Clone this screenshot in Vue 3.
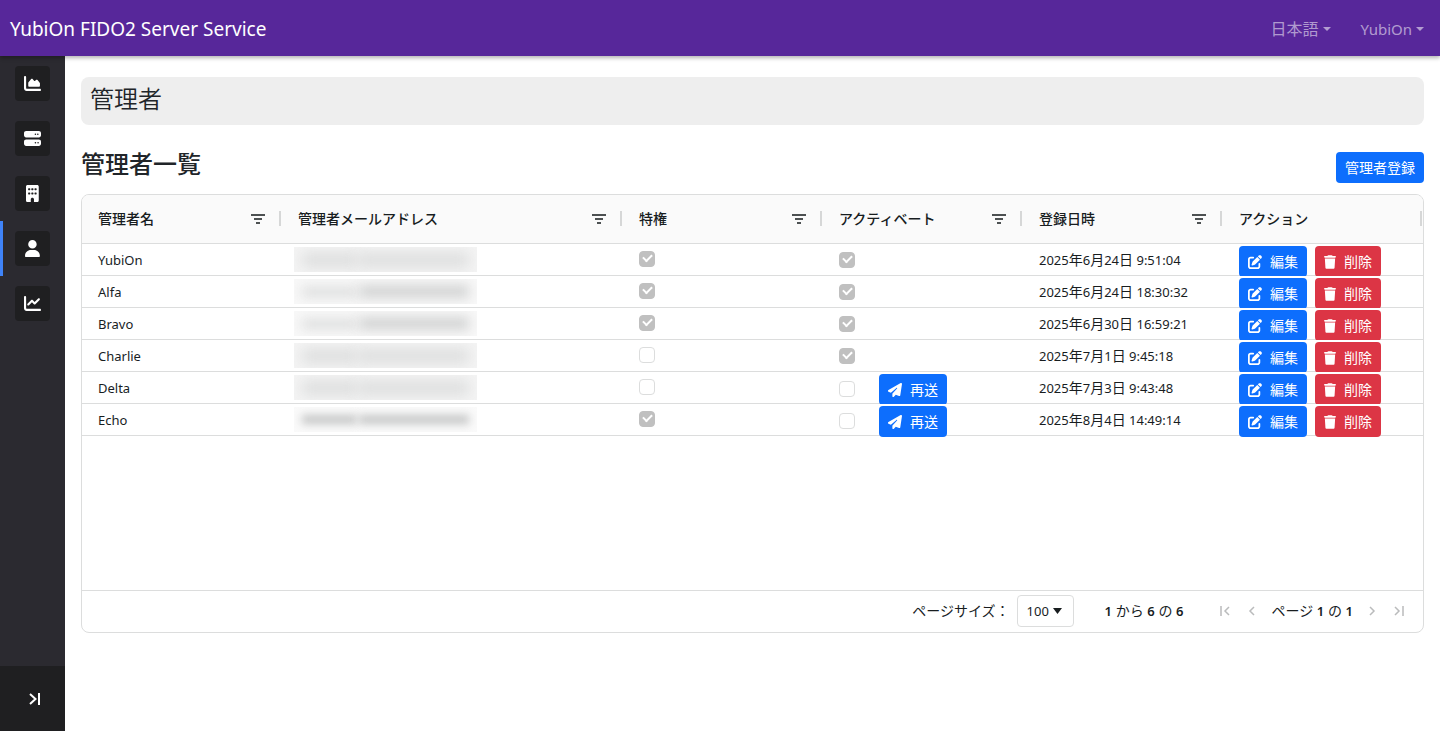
<script setup>
import { ref } from 'vue'

const icons = {
  area: { w: 512, d: 'M64 64c0-17.7-14.3-32-32-32S0 46.3 0 64V400c0 44.2 35.8 80 80 80H480c17.7 0 32-14.3 32-32s-14.3-32-32-32H80c-8.8 0-16-7.2-16-16V64zm96 288H448c17.7 0 32-14.3 32-32V251.8c0-7.6-2.7-15-7.7-20.8l-65.8-76.8c-12.1-14.2-33.7-15-46.9-1.8l-21 21c-10 10-26.4 9.2-35.4-1.6l-39.2-47c-12.6-15.1-35.7-15.4-48.7-.6L135.9 215c-5.1 5.8-7.9 13.3-7.9 21.1v84c0 17.7 14.3 32 32 32z' },
  server: { w: 512, d: 'M64 32C28.7 32 0 60.7 0 96v64c0 35.3 28.7 64 64 64H448c35.3 0 64-28.7 64-64V96c0-35.3-28.7-64-64-64H64zm280 72a24 24 0 1 1 0 48 24 24 0 1 1 0-48zm48 24a24 24 0 1 1 48 0 24 24 0 1 1 -48 0zM64 288c-35.3 0-64 28.7-64 64v64c0 35.3 28.7 64 64 64H448c35.3 0 64-28.7 64-64V352c0-35.3-28.7-64-64-64H64zm280 72a24 24 0 1 1 0 48 24 24 0 1 1 0-48zm56 24a24 24 0 1 1 48 0 24 24 0 1 1 -48 0z' },
  building: { w: 384, d: 'M48 0C21.5 0 0 21.5 0 48V464c0 26.5 21.5 48 48 48h96V432c0-26.5 21.5-48 48-48s48 21.5 48 48v80h96c26.5 0 48-21.5 48-48V48c0-26.5-21.5-48-48-48H48zM64 240c0-8.8 7.2-16 16-16h32c8.8 0 16 7.2 16 16v32c0 8.8-7.2 16-16 16H80c-8.8 0-16-7.2-16-16V240zm112-16h32c8.8 0 16 7.2 16 16v32c0 8.8-7.2 16-16 16H176c-8.8 0-16-7.2-16-16V240c0-8.8 7.2-16 16-16zm80 16c0-8.8 7.2-16 16-16h32c8.8 0 16 7.2 16 16v32c0 8.8-7.2 16-16 16H272c-8.8 0-16-7.2-16-16V240zM80 96h32c8.8 0 16 7.2 16 16v32c0 8.8-7.2 16-16 16H80c-8.8 0-16-7.2-16-16V112c0-8.8 7.2-16 16-16zm80 16c0-8.8 7.2-16 16-16h32c8.8 0 16 7.2 16 16v32c0 8.8-7.2 16-16 16H176c-8.8 0-16-7.2-16-16V112zM272 96h32c8.8 0 16 7.2 16 16v32c0 8.8-7.2 16-16 16H272c-8.8 0-16-7.2-16-16V112c0-8.8 7.2-16 16-16z' },
  user: { w: 448, d: 'M224 256A128 128 0 1 0 224 0a128 128 0 1 0 0 256zm-45.7 48C79.8 304 0 383.8 0 482.3C0 498.7 13.3 512 29.7 512H418.3c16.4 0 29.7-13.3 29.7-29.7C448 383.8 368.2 304 269.7 304H178.3z' },
  line: { w: 512, d: 'M64 64c0-17.7-14.3-32-32-32S0 46.3 0 64V400c0 44.2 35.8 80 80 80H480c17.7 0 32-14.3 32-32s-14.3-32-32-32H80c-8.8 0-16-7.2-16-16V64zm406.6 86.6c12.5-12.5 12.5-32.8 0-45.3s-32.8-12.5-45.3 0L320 210.7l-57.4-57.4c-12.5-12.5-32.8-12.5-45.3 0l-112 112c-12.5 12.5-12.5 32.8 0 45.3s32.8 12.5 45.3 0L240 221.3l57.4 57.4c12.5 12.5 32.8 12.5 45.3 0l128-128z' }
}

const menu = [
  { icon: icons.area, label: 'ダッシュボード' },
  { icon: icons.server, label: 'サーバー' },
  { icon: icons.building, label: '会社' },
  { icon: icons.user, label: '管理者', active: true },
  { icon: icons.line, label: '統計' }
]

const columns = [
  { title: '管理者名', filter: true },
  { title: '管理者メールアドレス', filter: true, wide: true },
  { title: '特権', filter: true },
  { title: 'アクティベート', filter: true },
  { title: '登録日時', filter: true },
  { title: 'アクション', filter: false }
]

const admins = [
  { name: 'YubiOn', privileged: true, activated: true, created: '2025年6月24日 9:51:04', tone: 'flat' },
  { name: 'Alfa', privileged: true, activated: true, created: '2025年6月24日 18:30:32', tone: 'mid' },
  { name: 'Bravo', privileged: true, activated: true, created: '2025年6月30日 16:59:21', tone: 'mid' },
  { name: 'Charlie', privileged: false, activated: true, created: '2025年7月1日 9:45:18', tone: 'flat' },
  { name: 'Delta', privileged: false, activated: false, created: '2025年7月3日 9:43:48', tone: 'flat' },
  { name: 'Echo', privileged: true, activated: false, created: '2025年8月4日 14:49:14', tone: 'sharp' }
]

// Splits a date into digit runs and kanji units, which are set at different sizes.
const dateParts = (text) => text.split(/([年月日])/).filter(Boolean)
const isUnit = (part) => /^[年月日]$/.test(part)

const pageSize = ref('100')
</script>

<template>
  <div class="app">
    <header class="topbar">
      <a class="brand" href="#">YubiOn FIDO2 Server Service</a>
      <nav class="topnav">
        <button type="button" class="drop lang">日本語<span class="caret"></span></button>
        <button type="button" class="drop">YubiOn<span class="caret"></span></button>
      </nav>
    </header>

    <div class="body">
      <aside class="sidebar">
        <nav class="menu">
          <a v-for="m in menu" :key="m.label" href="#" class="item" :class="{ active: m.active }" :aria-label="m.label">
            <span class="tile">
              <svg class="tile-icon" :viewBox="`0 0 ${m.icon.w} 512`" aria-hidden="true"><path :d="m.icon.d" /></svg>
            </span>
          </a>
        </nav>
        <button type="button" class="expand" aria-label="メニューを開く">
          <svg width="12" height="12" viewBox="0 0 12 12" aria-hidden="true"><path d="M1 1l5.5 5L1 11M10 0v12" fill="none" stroke="#fff" stroke-width="2" /></svg>
        </button>
      </aside>

      <main class="main">
        <h1 class="page-title">管理者</h1>
        <div class="list-head">
          <h2 class="list-title">管理者一覧</h2>
          <button type="button" class="btn primary">管理者登録</button>
        </div>

        <section class="grid">
          <div class="grid-body">
            <table class="table">
              <colgroup>
                <col v-for="c in columns" :key="c.title" :class="c.wide ? 'col-wide' : 'col'" />
              </colgroup>
              <thead>
                <tr>
                  <th v-for="c in columns" :key="c.title" scope="col">
                    <div class="th">
                      <span>{{ c.title }}</span>
                      <button v-if="c.filter" type="button" class="filter" :aria-label="c.title + 'フィルター'">
                        <svg width="16" height="16" viewBox="0 0 16 16" aria-hidden="true"><path d="M1 4h14M4 8h8M6 12h4" fill="none" stroke="#4d5152" stroke-width="2" /></svg>
                      </button>
                    </div>
                  </th>
                </tr>
              </thead>
              <tbody>
                <tr v-for="a in admins" :key="a.name">
                  <td><div class="cell">{{ a.name }}</div></td>
                  <td>
                    <div class="cell">
                      <span class="mask" :class="a.tone" role="img" aria-label="非表示のメールアドレス"><i class="smear left"></i><i class="smear right"></i></span>
                    </div>
                  </td>
                  <td><div class="cell check-cell"><input type="checkbox" class="check" :checked="a.privileged" disabled :aria-label="a.name + ' 特権'" /></div></td>
                  <td>
                    <div class="cell" :class="{ actions: !a.activated, resend: !a.activated }">
                      <input type="checkbox" class="check" :checked="a.activated" disabled :aria-label="a.name + ' アクティベート'" />
                      <button v-if="!a.activated" type="button" class="btn primary">
                        <svg class="ic" viewBox="0 0 512 512" aria-hidden="true"><path d="M498.1 5.6c10.1 7 15.4 19.1 13.5 31.2l-64 416c-1.5 9.7-7.4 18.2-16 23s-18.9 5.4-28 1.6L284 427.7l-68.5 74.1c-8.9 9.7-22.9 12.9-35.2 8.1S160 493.2 160 480V396.4c0-4 1.5-7.8 4.2-10.7L331.8 202.8c5.8-6.3 5.6-16-.4-22s-15.7-6.4-22-.7L106 360.8 17.7 316.6C7.1 311.3 .3 300.7 0 288.9s5.9-22.8 16.1-28.7l448-256c10.7-6.1 23.9-5.5 34 1.4z" /></svg>再送
                      </button>
                    </div>
                  </td>
                  <td><div class="cell"><time><span v-for="(p, i) in dateParts(a.created)" :key="i" :class="{ unit: isUnit(p) }">{{ p }}</span></time></div></td>
                  <td>
                    <div class="cell actions">
                      <button type="button" class="btn primary">
                        <svg class="ic" viewBox="0 0 512 512" aria-hidden="true"><path d="M471.6 21.7c-21.9-21.9-57.3-21.9-79.2 0L362.3 51.7l97.9 97.9 30.1-30.1c21.9-21.9 21.9-57.3 0-79.2L471.6 21.7zm-299.2 220c-6.1 6.1-10.8 13.6-13.5 21.9l-29.6 88.8c-2.9 8.6-.6 18.1 5.8 24.6s15.9 8.7 24.6 5.8l88.8-29.6c8.2-2.7 15.7-7.4 21.9-13.5L437.7 172.3 339.7 74.3 172.4 241.7zM96 64C43 64 0 107 0 160V416c0 53 43 96 96 96H352c53 0 96-43 96-96V320c0-17.7-14.3-32-32-32s-32 14.3-32 32v96c0 17.7-14.3 32-32 32H96c-17.7 0-32-14.3-32-32V160c0-17.7 14.3-32 32-32h96c17.7 0 32-14.3 32-32s-14.3-32-32-32H96z" /></svg>編集
                      </button>
                      <button type="button" class="btn danger">
                        <svg class="ic narrow" viewBox="0 0 448 512" aria-hidden="true"><path d="M135.2 17.7L128 32H32C14.3 32 0 46.3 0 64S14.3 96 32 96H416c17.7 0 32-14.3 32-32s-14.3-32-32-32H320l-7.2-14.3C307.4 6.8 296.3 0 284.2 0H163.8c-12.1 0-23.2 6.8-28.6 17.7zM416 128H32L53.2 467c1.6 25.3 22.6 45 47.9 45H346.9c25.3 0 46.3-19.7 47.9-45L416 128z" /></svg>削除
                      </button>
                    </div>
                  </td>
                </tr>
              </tbody>
            </table>
          </div>

          <footer class="pager">
            <div class="size">
              <label for="page-size">ページサイズ：</label>
              <span class="select-wrap">
                <select id="page-size" v-model="pageSize" class="select">
                  <option>20</option>
                  <option>50</option>
                  <option>100</option>
                </select>
                <svg class="select-caret" width="9" height="6" viewBox="0 0 9 6" aria-hidden="true"><path d="M0 0h9L4.500 6z" fill="#181d1f" /></svg>
              </span>
            </div>
            <div class="summary"><b>1</b> から <b>6</b> の <b>6</b></div>
            <div class="pages">
              <button type="button" class="page-btn" disabled aria-label="最初のページ"><svg width="16" height="16" viewBox="0 0 16 16"><path d="M4 3v10M12 4L8 8l4 4" /></svg></button>
              <button type="button" class="page-btn" disabled aria-label="前のページ"><svg width="16" height="16" viewBox="0 0 16 16"><path d="M10 4L6 8l4 4" /></svg></button>
              <span class="page-text">ページ <b>1</b> の <b>1</b></span>
              <button type="button" class="page-btn" disabled aria-label="次のページ"><svg width="16" height="16" viewBox="0 0 16 16"><path d="M6 4l4 4-4 4" /></svg></button>
              <button type="button" class="page-btn" disabled aria-label="最後のページ"><svg width="16" height="16" viewBox="0 0 16 16"><path d="M4 4l4 4-4 4M12 3v10" /></svg></button>
            </div>
          </footer>
        </section>
      </main>
    </div>
  </div>
</template>

<style>
body {
  margin: 0;
  background: #fff;
}
</style>

<style scoped>
.app {
  min-height: 100vh;
  display: flex;
  flex-direction: column;
  font-family: "Noto Sans", "Noto Sans CJK JP", sans-serif;
  font-size: 14px;
  color: #212529;
}
.app * {
  box-sizing: border-box;
}
button,
select {
  font: inherit;
  margin: 0;
}
.topbar {
  height: 56px;
  display: flex;
  align-items: center;
  justify-content: space-between;
  padding: 2px 16px 0 10px;
  background: #57279a;
  box-shadow: 0 2px 4px rgba(0, 0, 0, 0.3);
  position: relative;
  z-index: 2;
}
.brand {
  color: #fff;
  font-size: 19px;
  line-height: 30px;
  text-decoration: none;
}
.topnav {
  display: flex;
  gap: 30px;
}
.drop {
  display: flex;
  align-items: center;
  gap: 4px;
  padding: 0;
  border: 0;
  background: none;
  color: rgba(255, 255, 255, 0.55);
  font-size: 15px;
  line-height: 22px;
}
.lang {
  font-size: 16px;
}
.caret {
  border: 4px solid transparent;
  border-top-color: currentColor;
  border-bottom: 0;
}
.body {
  flex: 1;
  display: flex;
}
.sidebar {
  width: 65px;
  flex: none;
  display: flex;
  flex-direction: column;
  justify-content: space-between;
  background: #2b2a30;
}
.menu {
  display: flex;
  flex-direction: column;
}
.item {
  height: 55px;
  display: flex;
  justify-content: center;
  padding-top: 10px;
  position: relative;
}
.item.active::before {
  content: "";
  position: absolute;
  left: 0;
  top: 0;
  bottom: 0;
  width: 3px;
  background: #3f83f8;
}
.tile {
  width: 35px;
  height: 35px;
  display: flex;
  align-items: center;
  justify-content: center;
  border-radius: 4px;
  background: #1f1f21;
}
.tile-icon {
  height: 17px;
  fill: #fff;
}
.expand {
  height: 65px;
  display: flex;
  align-items: center;
  justify-content: center;
  padding: 0 0 0 5px;
  border: 0;
  background: #1f1f21;
}
.main {
  flex: 1;
  min-width: 0;
  padding: 21px 16px 0;
}
.page-title {
  margin: 0;
  height: 48px;
  padding: 0 9px;
  border-radius: 8px;
  background: #eee;
  font-family: "Noto Sans CJK JP", sans-serif;
  font-size: 24px;
  font-weight: 350;
  line-height: 41px;
}
.list-head {
  display: flex;
  align-items: flex-end;
  justify-content: space-between;
  margin: 22px 0 11px;
}
.list-title {
  margin: 0;
  font-family: "Noto Sans CJK JP", sans-serif;
  font-size: 24px;
  font-weight: 500;
  line-height: 32px;
  padding-bottom: 4px;
}
.btn {
  display: inline-flex;
  align-items: center;
  gap: 8px;
  height: 31px;
  padding: 0 9px;
  border: 0;
  border-radius: 4px;
  color: #fff;
  font-size: 14px;
  line-height: 21px;
  white-space: nowrap;
}
.primary {
  background: #0d6efd;
}
.danger {
  background: #dc3545;
}
.ic {
  width: 14px;
  height: 14px;
  fill: #fff;
}
.narrow {
  width: 12px;
}
.grid {
  height: 60vh;
  min-height: 300px;
  display: flex;
  flex-direction: column;
  border: 1px solid #dcdddd;
  border-radius: 8px;
  overflow: hidden;
  color: #181d1f;
}
.grid-body {
  flex: 1;
  min-height: 0;
  overflow: hidden;
}
.table {
  width: 100%;
  min-width: 1200px;
  table-layout: fixed;
  border-collapse: separate;
  border-spacing: 0;
}
.col {
  width: 200px;
}
th {
  position: relative;
  height: 49px;
  padding: 0 16px;
  border-bottom: 1px solid #dcdddd;
  background: #fafafa;
  font-weight: 500;
  text-align: left;
}
th::after {
  content: "";
  position: absolute;
  right: 1px;
  top: 16px;
  width: 2px;
  height: 15px;
  background: #d6d7d7;
}
.th {
  display: flex;
  align-items: center;
  justify-content: space-between;
  line-height: 20px;
}
.filter {
  display: flex;
  padding: 0;
  border: 0;
  background: none;
}
tbody tr {
  position: relative;
  background: #fff;
}
td {
  height: 32px;
  padding: 0 16px;
  border-bottom: 1px solid #dcdddd;
}
.cell {
  height: 31px;
  display: flex;
  align-items: center;
  font-size: 13px;
  line-height: 20px;
  white-space: nowrap;
}
.unit {
  font-size: 14px;
}
.check-cell {
  padding-bottom: 2px;
}
.actions {
  align-items: flex-start;
  gap: 8px;
  padding-top: 2px;
}
.resend {
  gap: 24px;
}
.resend .check {
  margin-top: 7px;
}
.check {
  appearance: none;
  flex: none;
  width: 16px;
  height: 16px;
  margin: 0;
  border: 1px solid #dcdddd;
  border-radius: 4px;
  background: #fff;
  display: grid;
  place-items: center;
}
.check:checked {
  border-color: #c0c0c0;
  background: #c0c0c0;
}
.check:checked::before {
  content: "";
  box-sizing: border-box;
  width: 9px;
  height: 6px;
  margin-bottom: 3px;
  border: 2px solid #fff;
  border-top: 0;
  border-right: 0;
  transform: rotate(-45deg);
}
.mask {
  display: flex;
  align-items: center;
  gap: 2px;
  width: 183px;
  height: 25px;
  margin-left: -4px;
  padding: 0 8px;
  background: #f8f8f8;
  overflow: hidden;
}
.smear {
  flex: 1;
  height: 10px;
  background: #dcdddd;
  filter: blur(6px);
}
.smear.right {
  flex: 2;
  height: 13px;
  background: #d2d3d3;
}
.flat {
  gap: 0;
  background: #f4f4f4;
}
.flat .smear {
  height: 14px;
  background: #dcdddd;
  filter: blur(7px);
}
.sharp {
  background: #fafafa;
}
.sharp .smear {
  height: 9px;
  background: #c4c5c5;
  filter: blur(4px);
}
.pager {
  height: 42px;
  flex: none;
  display: flex;
  align-items: center;
  justify-content: flex-end;
  gap: 31px;
  padding: 0 16px;
  border-top: 1px solid #dcdddd;
  line-height: 20px;
}
.pager b {
  font-size: 13px;
  font-weight: 600;
}
.size {
  display: flex;
  align-items: center;
  gap: 7px;
}
.select-wrap {
  position: relative;
  display: flex;
}
.select {
  appearance: none;
  width: 57px;
  height: 32px;
  padding: 0 9px;
  border: 1px solid #dcdddd;
  border-radius: 4px;
  background: #fff;
  color: #181d1f;
  font-size: 13px;
}
.select-caret {
  position: absolute;
  right: 12px;
  top: 13px;
  pointer-events: none;
}
.pages {
  display: flex;
  align-items: center;
  gap: 11px;
  margin-left: 3px;
}
.page-btn {
  display: flex;
  padding: 0;
  border: 0;
  background: none;
}
.page-btn path {
  fill: none;
  stroke: #babbbc;
  stroke-width: 1.5;
}
</style>
